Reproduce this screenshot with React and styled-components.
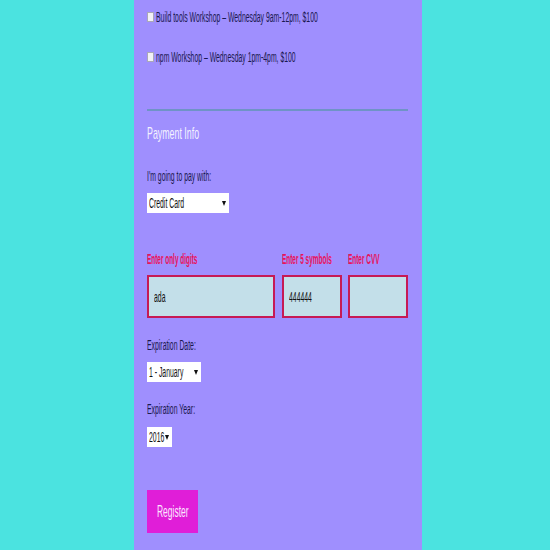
import React from 'react';
import styled, { createGlobalStyle } from 'styled-components';

const GlobalStyle = createGlobalStyle`
  body {
    margin: 0;
    background: #4be3e0;
    font-family: "Liberation Sans", Arial, sans-serif;
  }
`;

const Page = styled.div`
  min-height: 100vh;
  padding-left: 134px;
`;

const Column = styled.form`
  width: 288px;
  min-height: 100vh;
  box-sizing: border-box;
  background: #9f8ffe;
  padding: 0 14px 20px 13px;
  display: flex;
  flex-direction: column;
`;

// squished text, like the condensed look in the design
const Text = styled.span`
  display: inline-block;
  white-space: nowrap;
  transform: scaleX(${(p) => p.$sx || 0.49});
  transform-origin: ${(p) => (p.$center ? 'center' : 'left')} center;
`;

const CheckRow = styled.label`
  display: flex;
  align-items: center;
  height: 20px;
  margin-top: ${(p) => p.$top}px;
  font-size: 14px;
  color: #1a1850;
`;

const Check = styled.span`
  flex-shrink: 0;
  width: 5px;
  height: 8px;
  margin-right: 2px;
  background: #f2f1f6;
  border: 1px solid #a9a7b8;
`;

const Divider = styled.hr`
  margin: 42px 0 0;
  border: none;
  border-top: 2px solid #6f93c6;
`;

const Legend = styled.h3`
  margin: 13px 0 0;
  height: 20px;
  line-height: 20px;
  font-size: 17px;
  font-weight: normal;
  color: #f4f2ff;
`;

const Label = styled.div`
  margin-top: ${(p) => p.$top}px;
  height: 18px;
  line-height: 18px;
  font-size: 14px;
  color: #1a1850;
`;

const SelectBox = styled.div`
  position: relative;
  overflow: hidden;
  margin-top: ${(p) => p.$top}px;
  width: ${(p) => p.$w}px;
  height: 20px;
  box-sizing: border-box;
  background: #fff;
  display: flex;
  align-items: center;
  padding-left: 2px;
  font-size: 14px;
  color: #111;
`;

const Arrow = styled.span`
  position: absolute;
  right: 3px;
  top: 8px;
  width: 0;
  height: 0;
  border-left: 2px solid transparent;
  border-right: 2px solid transparent;
  border-top: 5px solid #111;
`;

const CardGrid = styled.div`
  margin-top: 37px;
  display: grid;
  grid-template-columns: 128px 60px 60px;
  justify-content: space-between;
  row-gap: 7px;
`;

const ErrorText = styled.div`
  height: 18px;
  line-height: 18px;
  font-size: 14px;
  font-weight: bold;
  color: #e8125a;
`;

const Field = styled.div`
  height: 43px;
  box-sizing: border-box;
  background: #c3dfe9;
  border: 2px solid #c61a55;
  display: flex;
  align-items: center;
  padding-left: 5px;
  font-size: 14px;
  color: #111;
`;

const Button = styled.div`
  margin-top: 43px;
  width: 51px;
  height: 43px;
  background: #e01ed8;
  color: #fbe6ff;
  font-size: 16px;
  display: flex;
  align-items: center;
  justify-content: center;
`;

const App = () => {
  return (
    <Page>
      <GlobalStyle />
      <Column>
        <CheckRow $top={7}>
          <Check />
          <Text>Build tools Workshop – Wednesday 9am-12pm, $100</Text>
        </CheckRow>
        <CheckRow $top={20}>
          <Check />
          <Text>npm Workshop – Wednesday 1pm-4pm, $100</Text>
        </CheckRow>

        <Divider />
        <Legend><Text $sx={0.52}>Payment Info</Text></Legend>

        <Label $top={23}><Text>I'm going to pay with:</Text></Label>
        <SelectBox $top={8} $w={82}>
          <Text>Credit Card</Text>
          <Arrow />
        </SelectBox>

        <CardGrid>
          <ErrorText><Text $sx={0.46}>Enter only digits</Text></ErrorText>
          <ErrorText><Text $sx={0.46}>Enter 5 symbols</Text></ErrorText>
          <ErrorText><Text $sx={0.46}>Enter CVV</Text></ErrorText>
          <Field><Text>ada</Text></Field>
          <Field><Text>444444</Text></Field>
          <Field />
        </CardGrid>

        <Label $top={18}><Text>Expiration Date:</Text></Label>
        <SelectBox $top={8} $w={54}>
          <Text>1 - January</Text>
          <Arrow />
        </SelectBox>

        <Label $top={18}><Text>Expiration Year:</Text></Label>
        <SelectBox $top={9} $w={25}>
          <Text>2016</Text>
          <Arrow />
        </SelectBox>

        <Button><Text $sx={0.53} $center>Register</Text></Button>
      </Column>
    </Page>
  );
};

export default App;
